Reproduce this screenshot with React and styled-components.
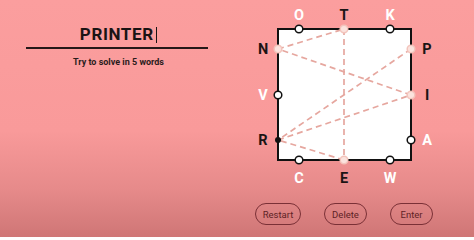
import styled, { createGlobalStyle } from "styled-components";

const GlobalStyle = createGlobalStyle`
  html, body {
    margin: 0;
    padding: 0;
  }
  body {
    font-family: "Roboto", "Liberation Sans", sans-serif;
  }
`;

const Page = styled.div`
  width: 474px;
  height: 237px;
  display: flex;
  overflow: hidden;
  background: linear-gradient(
    to bottom,
    #fb9e9e 0%,
    #f99a9a 55%,
    #e68a8a 80%,
    #cf7676 100%
  );
`;

const WordPanel = styled.div`
  width: 237px;
  display: flex;
  flex-direction: column;
  align-items: center;
  padding-top: 24px;
`;

const Word = styled.div`
  font-size: 17px;
  font-weight: 700;
  letter-spacing: 0.6px;
  color: #1a1414;
  height: 21px;
  line-height: 21px;
  display: flex;
  align-items: center;
`;

const Caret = styled.span`
  display: inline-block;
  width: 1.5px;
  height: 16px;
  margin-left: 2px;
  background: #1a1414;
`;

const Rule = styled.div`
  width: 182px;
  height: 2px;
  margin-top: 2px;
  margin-left: -3px;
  background: #241818;
`;

const Hint = styled.div`
  margin-top: 8px;
  font-size: 9px;
  font-weight: 700;
  color: #2a1c1c;
`;

const BoardPanel = styled.div`
  width: 237px;
  display: flex;
  flex-direction: column;
`;

const Board = styled.svg`
  display: block;
`;

const Controls = styled.div`
  display: flex;
  gap: 23px;
  padding-left: 18px;
  margin-top: 13px;
`;

const Button = styled.button`
  width: ${({ w }) => w}px;
  height: 22px;
  border: 1.3px solid #7a3036;
  border-radius: 11px;
  background: transparent;
  font-family: "Roboto", "Liberation Sans", sans-serif;
  font-size: 9.5px;
  color: #5e2226;
  padding: 0;
`;

// board coordinates inside the svg
const L = 41;
const R = 174;
const T = 29;
const B = 160;

const sides = [
  { letter: "O", x: 62, y: T, lx: 62, ly: 15 },
  { letter: "T", x: 107, y: T, lx: 107, ly: 15 },
  { letter: "K", x: 153, y: T, lx: 153, ly: 15 },
  { letter: "N", x: L, y: 49, lx: 26, ly: 49 },
  { letter: "V", x: L, y: 95, lx: 26, ly: 95 },
  { letter: "R", x: L, y: 140, lx: 26, ly: 140 },
  { letter: "P", x: R, y: 49, lx: 190, ly: 49 },
  { letter: "I", x: R, y: 95, lx: 190, ly: 95 },
  { letter: "A", x: R, y: 140, lx: 190, ly: 140 },
  { letter: "C", x: 62, y: B, lx: 62, ly: 178 },
  { letter: "E", x: 107, y: B, lx: 107, ly: 178 },
  { letter: "W", x: 153, y: B, lx: 153, ly: 178 },
];

const path = ["P", "R", "I", "N", "T", "E", "R"];
const used = new Set(path);
const current = "R";

function point(letter) {
  return sides.find((s) => s.letter === letter);
}

export default function App() {
  const segments = [];
  for (let i = 0; i < path.length - 1; i++) {
    segments.push([point(path[i]), point(path[i + 1])]);
  }

  return (
    <>
      <GlobalStyle />
      <Page>
        <WordPanel>
          <Word>
            PRINTER
            <Caret />
          </Word>
          <Rule />
          <Hint>Try to solve in 5 words</Hint>
        </WordPanel>
        <BoardPanel>
          <Board width="237" height="190" viewBox="0 0 237 190">
            <rect x={L} y={T} width={R - L} height={B - T} fill="#fff" stroke="#111" strokeWidth="2" />
            {segments.map(([a, b], i) => (
              <line
                key={i}
                x1={a.x}
                y1={a.y}
                x2={b.x}
                y2={b.y}
                stroke="#e6a79f"
                strokeWidth="1.7"
                strokeDasharray="6 4"
              />
            ))}
            {sides.map((s) => {
              const isUsed = used.has(s.letter);
              const isCurrent = s.letter === current;
              return (
                <g key={s.letter}>
                  {isCurrent ? (
                    <circle cx={s.x} cy={s.y} r="3" fill="#111" />
                  ) : (
                    <circle
                      cx={s.x}
                      cy={s.y}
                      r="3.8"
                      fill={isUsed ? "#fbe3de" : "#fff"}
                      stroke={isUsed ? "#f3c4bc" : "#111"}
                      strokeWidth="1.5"
                    />
                  )}
                  <text
                    x={s.lx}
                    y={s.ly}
                    textAnchor="middle"
                    dominantBaseline="central"
                    fontFamily="Roboto, 'Liberation Sans', sans-serif"
                    fontWeight="700"
                    fontSize="14.5"
                    fill={isUsed ? "#1a1414" : "#fff"}
                  >
                    {s.letter}
                  </text>
                </g>
              );
            })}
          </Board>
          <Controls>
            <Button w={46}>Restart</Button>
            <Button w={43}>Delete</Button>
            <Button w={43}>Enter</Button>
          </Controls>
        </BoardPanel>
      </Page>
    </>
  );
}
